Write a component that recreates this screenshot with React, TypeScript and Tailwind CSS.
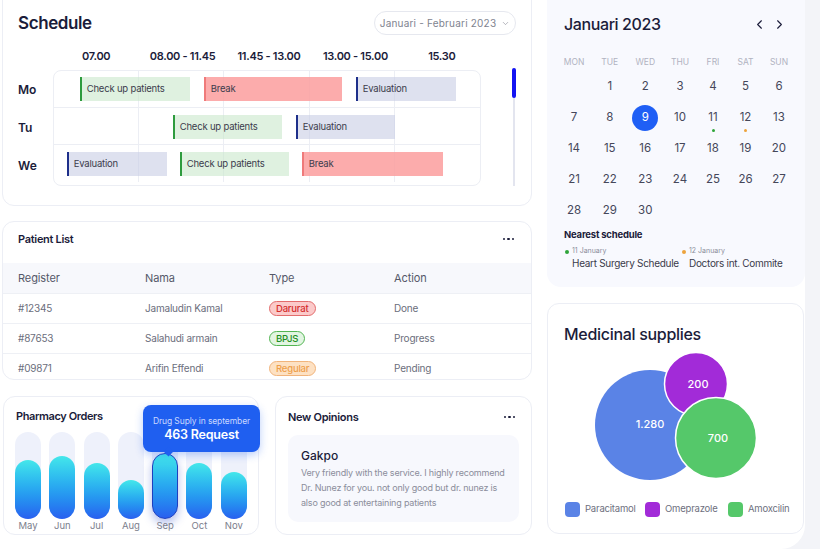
import React from "react";
import { ChevronLeft, ChevronRight, ChevronDown } from "lucide-react";

type Ev = { label: string; kind: "check" | "break" | "eval"; left: number; width: number };

const evStyle = {
  check: "bg-[#c9e7cc]/60 border-[#2e9b3e]",
  break: "bg-[#fb9d9d]/85 border-[#ef7a7a]",
  eval: "bg-[#c8cde4]/60 border-[#1e2f8a]",
};

const rows: { day: string; top: number; events: Ev[] }[] = [
  {
    day: "Mo",
    top: 6,
    events: [
      { label: "Check up patients", kind: "check", left: 26, width: 110 },
      { label: "Break", kind: "break", left: 150, width: 138 },
      { label: "Evaluation", kind: "eval", left: 302, width: 100 },
    ],
  },
  {
    day: "Tu",
    top: 7,
    events: [
      { label: "Check up patients", kind: "check", left: 119, width: 109 },
      { label: "Evaluation", kind: "eval", left: 242, width: 99 },
    ],
  },
  {
    day: "We",
    top: 7,
    events: [
      { label: "Evaluation", kind: "eval", left: 13, width: 100 },
      { label: "Check up patients", kind: "check", left: 126, width: 109 },
      { label: "Break", kind: "break", left: 248, width: 141 },
    ],
  },
];

const times = ["07.00", "08.00 - 11.45", "11.45 - 13.00", "13.00 - 15.00", "15.30"];

const patients = [
  { reg: "#12345", name: "Jamaludin Kamal", type: "Darurat", action: "Done" },
  { reg: "#87653", name: "Salahudi armain", type: "BPJS", action: "Progress" },
  { reg: "#09871", name: "Arifin Effendi", type: "Regular", action: "Pending" },
];

const badge: Record<string, string> = {
  Darurat: "bg-[#fbcaca] border-[#e36d6d] text-[#d42d2d]",
  BPJS: "bg-[#e2f5e2] border-[#53b553] text-[#1f8f25]",
  Regular: "bg-[#fde1c3] border-[#f1b47c] text-[#ee9f4c]",
};

const months = [
  { m: "May", h: 59 },
  { m: "Jun", h: 63 },
  { m: "Jul", h: 56 },
  { m: "Aug", h: 39 },
  { m: "Sep", h: 66 },
  { m: "Oct", h: 56 },
  { m: "Nov", h: 47 },
];

const weeks: (number | null)[][] = [
  [null, 1, 2, 3, 4, 5, 6],
  [7, 8, 9, 10, 11, 12, 13],
  [14, 15, 16, 17, 18, 19, 20],
  [21, 22, 23, 24, 25, 26, 27],
  [28, 29, 30, null, null, null, null],
];

const Dots = () => (
  <div className="flex gap-[2px] items-center h-[14px]">
    <span className="w-[2.5px] h-[2.5px] rounded-full bg-[#1b1c3a]" />
    <span className="w-[2.5px] h-[2.5px] rounded-full bg-[#1b1c3a]" />
    <span className="w-[2.5px] h-[2.5px] rounded-full bg-[#1b1c3a]" />
  </div>
);

const App = () => {
  return (
    <div className="w-[820px] h-[549px] overflow-hidden bg-[#f3f4f8] font-['Inter',sans-serif] text-[#1b1c3a]">
      <div className="w-[805px] h-[549px] bg-white rounded-br-[24px] flex gap-[15px] pl-[2px] overflow-hidden">
        {/* left column */}
        <div className="w-[530px] flex flex-col -mt-[12px]">
          {/* Schedule */}
          <div className="h-[218px] shrink-0 rounded-[12px] border border-[#eceef5] bg-white px-[15px] pt-[22px]">
            <div className="flex justify-between items-center h-[24px]">
              <h1 className="text-[17px] font-semibold leading-[24px] tracking-[-0.4px]">Schedule</h1>
              <div className="h-[24px] w-[142px] rounded-full border border-[#e6e8ef] flex items-center justify-center gap-[5px] text-[10px] text-[#80838f] tracking-[0.2px]">
                Januari - Februari 2023
                <ChevronDown size={9} strokeWidth={1.5} />
              </div>
            </div>
            <div className="mt-[14px] pl-[35px]">
              <div className="w-[432px] grid grid-cols-5 text-[11px] font-semibold leading-[14px] text-center tracking-[-0.3px]">
                {times.map((t) => (
                  <span key={t}>{t}</span>
                ))}
              </div>
            </div>
            <div className="mt-[7px] flex">
              <div className="w-[35px] flex flex-col pt-[1px]">
                {rows.map((r) => (
                  <div key={r.day} className="h-[38px] flex items-center text-[12px] font-semibold">
                    {r.day}
                  </div>
                ))}
              </div>
              <div className="w-[432px] rounded-[8px] border border-[#eceef4]">
                {rows.map((r, i) => (
                  <div
                    key={r.day}
                    className={`relative h-[37px] grid grid-cols-5 ${i < 2 ? "border-b border-[#eceef4]" : ""}`}
                  >
                    {[0, 1, 2, 3, 4].map((c) => (
                      <div key={c} className={c < 4 ? "border-r border-[#eceef4]" : ""} />
                    ))}
                    {r.events.map((e) => (
                      <div
                        key={e.label + e.left}
                        className={`absolute h-[24px] border-l-2 flex items-center pl-[5px] text-[9.5px] tracking-[-0.2px] text-[#3b3c4c] ${evStyle[e.kind]}`}
                        style={{ left: e.left, width: e.width, top: r.top }}
                      >
                        {e.label}
                      </div>
                    ))}
                  </div>
                ))}
              </div>
              <div className="ml-[31px] -mt-[2px] h-[118px] w-[4px] relative flex justify-center">
                <div className="w-[2px] h-full bg-[#e3e5ef]" />
                <div className="absolute top-0 left-0 w-[4px] h-[30px] rounded-full bg-[#1414f2]" />
              </div>
            </div>
          </div>

          {/* Patient List */}
          <div className="mt-[15px] h-[159px] shrink-0 rounded-[12px] border border-[#eceef5] bg-white overflow-hidden">
            <div className="h-[41px] px-[15px] pt-[10px] flex justify-between items-start">
              <h2 className="text-[11px] font-semibold leading-[14px] tracking-[-0.3px]">Patient List</h2>
              <div className="pr-[2px]">
                <Dots />
              </div>
            </div>
            <div className="h-[30px] bg-[#f7f8fc] grid grid-cols-[127px_124px_125px_1fr] pl-[15px] items-center text-[11px] text-[#555869] tracking-[-0.1px]">
              <span>Register</span>
              <span>Nama</span>
              <span>Type</span>
              <span>Action</span>
            </div>
            {patients.map((p) => (
              <div
                key={p.reg}
                className="h-[30px] border-t border-[#eef0f5] grid grid-cols-[127px_124px_125px_1fr] pl-[15px] items-center text-[10px] text-[#6b6e7c] tracking-[-0.2px]"
              >
                <span>{p.reg}</span>
                <span>{p.name}</span>
                <span>
                  <span
                    className={`inline-flex items-center h-[15px] px-[6px] rounded-full border text-[9.5px] font-medium ${badge[p.type]}`}
                  >
                    {p.type}
                  </span>
                </span>
                <span>{p.action}</span>
              </div>
            ))}
          </div>

          {/* bottom row */}
          <div className="mt-[16px] flex gap-[16px]">
            <div className="relative ml-[1px] w-[256px] h-[139px] rounded-[12px] border border-[#eceef5] bg-white pt-[12px]">
              <h2 className="pl-[12px] text-[11px] font-semibold leading-[14px] tracking-[-0.4px]">Pharmacy Orders</h2>
              <div className="mt-[9px] pl-[11px] flex gap-[8.3px]">
                {months.map((b) => (
                  <div key={b.m} className="flex flex-col items-center w-[26px]">
                    <div className="w-[26px] h-[87px] rounded-full bg-[#eef1fb] flex items-end">
                      <div
                        className={`w-full rounded-full bg-linear-to-b from-[#44e7ea] to-[#2a5fef] ${
                          b.m === "Sep" ? "border-[1.5px] border-[#1e3fbf] shadow-[0_4px_10px_rgba(30,64,200,0.35)]" : ""
                        }`}
                        style={{ height: b.h }}
                      />
                    </div>
                    <span className="mt-[1px] text-[9.5px] leading-[12px] text-[#7b7e8c]">{b.m}</span>
                  </div>
                ))}
              </div>
              <div className="absolute left-[139px] top-[8px] w-[117px] h-[47px] rounded-[8px] bg-[#1f5ff0] flex flex-col items-center justify-center shadow-[0_3px_8px_rgba(31,95,240,0.3)]">
                <span className="text-[8.5px] leading-[12px] text-[#c9d7ff] tracking-[-0.1px]">Drug Suply in september</span>
                <span className="text-[12.5px] leading-[16px] font-semibold text-white tracking-[-0.2px]">463 Request</span>
                <span className="absolute -bottom-[3px] left-[22px] w-[7px] h-[7px] rotate-45 bg-[#1f5ff0]" />
              </div>
            </div>

            <div className="w-[257px] h-[139px] rounded-[12px] border border-[#eceef5] bg-white px-[12px] pt-[13px]">
              <div className="flex justify-between items-center pr-[4px]">
                <h2 className="text-[11px] font-semibold leading-[14px] tracking-[-0.3px]">New Opinions</h2>
                <Dots />
              </div>
              <div className="mt-[11px] h-[87px] rounded-[10px] bg-[#f7f8fd] px-[13px] pt-[13px]">
                <div className="text-[12px] font-medium leading-[16px]">Gakpo</div>
                <p className="mt-[1px] text-[9px] leading-[15px] text-[#8b8d9b] whitespace-nowrap tracking-[-0.2px]">
                  Very friendly with the service. I highly recommend
                  <br />
                  Dr. Nunez for you. not only good but dr. nunez is
                  <br />
                  also good at entertaining patients
                </p>
              </div>
            </div>
          </div>
        </div>

        {/* right column */}
        <div className="w-[258px] flex flex-col -mt-[12px]">
          <div className="h-[299px] shrink-0 rounded-[14px] bg-[#f8f9fe] pt-[25px]">
            <div className="flex justify-between items-center pl-[17px] pr-[18px] h-[22px]">
              <h2 className="text-[16px] font-medium leading-[22px] tracking-[-0.4px]">Januari 2023</h2>
              <div className="flex items-center gap-[5px] text-[#1b1c3a]">
                <ChevronLeft size={15} strokeWidth={1.8} />
                <ChevronRight size={15} strokeWidth={1.8} />
              </div>
            </div>
            <div className="mt-[20px] pl-[9px] grid grid-cols-[36px_35.5px_35.5px_34px_32px_33px_34px] h-[14px] items-center text-center text-[8.5px] text-[#b1b3c1]">
              {["MON", "TUE", "WED", "THU", "FRI", "SAT", "SUN"].map((d) => (
                <span key={d}>{d}</span>
              ))}
            </div>
            <div className="mt-[2.5px] pl-[9px]">
              {weeks.map((w, i) => (
                <div
                  key={i}
                  className="grid grid-cols-[36px_35.5px_35.5px_34px_32px_33px_34px] h-[31px] items-center text-center text-[11.5px] text-[#45475a]"
                >
                  {w.map((d, j) => (
                    <div key={j} className="relative flex justify-center items-center h-[31px]">
                      {d === 9 ? (
                        <span className="w-[26px] h-[26px] rounded-full bg-[#1f5ff5] text-white flex items-center justify-center">
                          9
                        </span>
                      ) : (
                        <span>{d ?? ""}</span>
                      )}
                      {d === 11 && (
                        <span className="absolute top-[26px] w-[3px] h-[3px] rounded-full bg-[#2fa53a]" />
                      )}
                      {d === 12 && (
                        <span className="absolute top-[26px] w-[3px] h-[3px] rounded-full bg-[#eda33d]" />
                      )}
                    </div>
                  ))}
                </div>
              ))}
            </div>
            <div className="mt-[2px] pl-[17px]">
              <h3 className="text-[9.5px] font-bold leading-[12px] tracking-[-0.2px]">Nearest schedule</h3>
              <div className="mt-[5px] flex">
                <div className="w-[119px] relative pl-[8px]">
                  <span className="absolute left-[1px] top-[4px] w-[4px] h-[4px] rounded-full bg-[#2fa53a]" />
                  <div className="text-[7px] leading-[10px] text-[#8b8d9b]">11 January</div>
                  <div className="text-[10px] leading-[14px] text-[#3a3b4a] whitespace-nowrap tracking-[-0.3px]">
                    Heart Surgery Schedule
                  </div>
                </div>
                <div className="relative pl-[6px]">
                  <span className="absolute -left-[1px] top-[4px] w-[4px] h-[4px] rounded-full bg-[#eda33d]" />
                  <div className="text-[7px] leading-[10px] text-[#8b8d9b]">12 January</div>
                  <div className="text-[10px] leading-[14px] text-[#3a3b4a] whitespace-nowrap tracking-[-0.3px]">
                    Doctors int. Commite
                  </div>
                </div>
              </div>
            </div>
          </div>

          <div className="mt-[16px] w-[257px] h-[231px] shrink-0 rounded-[12px] border border-[#eceef5] bg-white pt-[20px]">
            <h2 className="pl-[16px] text-[16px] font-medium leading-[20px] tracking-[-0.3px]">Medicinal supplies</h2>
            <svg className="mt-[2px] block" width="255" height="140" viewBox="0 0 255 140">
              <circle cx="102" cy="79" r="55" fill="#5a83e6" />
              <circle cx="148" cy="38" r="31.5" fill="#a22bd8" stroke="#fff" strokeWidth="1.5" />
              <circle cx="168" cy="92" r="40.5" fill="#55c86a" stroke="#fff" strokeWidth="1.5" />
              <text x="102" y="82" textAnchor="middle" fill="#fff" fontSize="11" fontWeight="500" fontFamily="Inter, sans-serif">
                1.280
              </text>
              <text x="150" y="42" textAnchor="middle" fill="#fff" fontSize="11" fontWeight="500" fontFamily="Inter, sans-serif">
                200
              </text>
              <text x="170" y="96" textAnchor="middle" fill="#fff" fontSize="11" fontWeight="500" fontFamily="Inter, sans-serif">
                700
              </text>
            </svg>
            <div className="mt-[16px] pl-[17px] flex items-center text-[9.5px] text-[#6e7080] tracking-[-0.2px]">
              <div className="w-[80px] flex items-center gap-[5px]">
                <span className="w-[15px] h-[15px] rounded-[4px] bg-[#5a83e6]" />
                Paracitamol
              </div>
              <div className="w-[83px] flex items-center gap-[5px]">
                <span className="w-[15px] h-[15px] rounded-[4px] bg-[#a22bd8]" />
                Omeprazole
              </div>
              <div className="flex items-center gap-[5px]">
                <span className="w-[15px] h-[15px] rounded-[4px] bg-[#55c86a]" />
                Amoxcilin
              </div>
            </div>
          </div>
        </div>
      </div>
    </div>
  );
};

export default App;
